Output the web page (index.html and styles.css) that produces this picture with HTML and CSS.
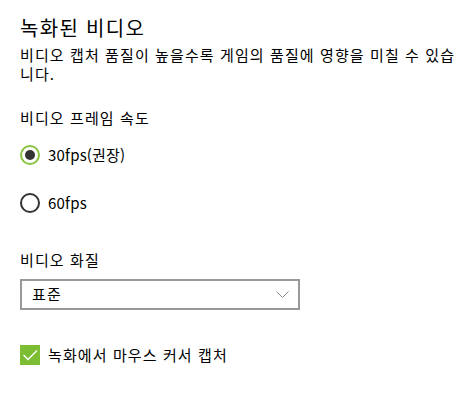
FILE: index.html
```html
<!DOCTYPE html>
<html lang="ko">
<head>
<meta charset="utf-8">
<link rel="stylesheet" href="styles.css">
</head>
<body>
<main class="page">
  <h1 class="title">녹화된 비디오</h1>
  <p class="desc"><span class="line">비디오 캡처 품질이 높을수록 게임의 품질에 영향을 미칠 수 있습</span><span class="line">니다.</span></p>

  <section class="group frame">
    <div class="label">비디오 프레임 속도</div>
    <div class="radios">
      <label class="radio checked"><span class="ring"><span class="dot"></span></span><span class="rtext">30fps(권장)</span></label>
      <label class="radio"><span class="ring"></span><span class="rtext">60fps</span></label>
    </div>
  </section>

  <section class="group quality">
    <div class="label">비디오 화질</div>
    <div class="select">
      <span class="value">표준</span>
      <svg class="chev" width="13" height="7" viewBox="0 0 13 7"><path d="M0.5 0.5 L6.5 6.5 L12.5 0.5" fill="none" stroke="#8c8c8c" stroke-width="1"/></svg>
    </div>
  </section>

  <label class="check">
    <span class="box"><svg width="20" height="20" viewBox="0 0 20 20"><path d="M3.5 10 L8 14.5 L17 5.5" fill="none" stroke="#fff" stroke-width="1.3"/></svg></span>
    <span class="ctext">녹화에서 마우스 커서 캡처</span>
  </label>
</main>
</body>
</html>
```

FILE: styles.css
```css
html, body {
  margin: 0;
  padding: 0;
  background: #fff;
}
.page {
  padding: 14px 0 0 20px;
  font-family: "Noto Sans CJK KR", "Noto Sans", sans-serif;
  color: #000;
  display: flex;
  flex-direction: column;
  align-items: flex-start;
}
.title {
  margin: 0;
  font-size: 20px;
  font-weight: 400;
  line-height: 28px;
  letter-spacing: 1.3px;
}
.desc {
  margin: 3px 0 0;
  font-size: 15px;
  line-height: 19px;
  letter-spacing: 1.1px;
  display: flex;
  flex-direction: column;
}
.line {
  white-space: nowrap;
}
.group {
  display: flex;
  flex-direction: column;
  align-items: flex-start;
}
.frame {
  margin-top: 25px;
}
.label {
  font-size: 15px;
  line-height: 20px;
  letter-spacing: 1.1px;
}
.radios {
  margin-top: 17px;
  display: flex;
  flex-direction: column;
  gap: 28px;
}
.radio {
  display: flex;
  align-items: center;
  gap: 8px;
  height: 20px;
  font-size: 15px;
}
.ring {
  width: 20px;
  height: 20px;
  box-sizing: border-box;
  border: 2px solid #333;
  border-radius: 50%;
  display: flex;
  align-items: center;
  justify-content: center;
}
.radio.checked .ring {
  border-color: #88c440;
}
.dot {
  width: 10px;
  height: 10px;
  border-radius: 50%;
  background: #333;
}
.rtext {
  line-height: 20px;
  letter-spacing: 0.2px;
}
.quality {
  margin-top: 37px;
}
.select {
  margin-top: 9px;
  box-sizing: border-box;
  width: 280px;
  height: 31px;
  border: 2px solid #999;
  display: flex;
  align-items: center;
  justify-content: space-between;
  padding: 0 9px 0 10px;
  font-size: 15px;
  letter-spacing: 1.1px;
}
.value {
  line-height: 20px;
  margin-top: -1px;
}
.chev {
  display: block;
  margin-top: -1px;
}
.check {
  margin-top: 35px;
  display: flex;
  align-items: center;
  gap: 8px;
  font-size: 15px;
}
.box {
  width: 20px;
  height: 20px;
  background: #7cbd34;
  display: block;
}
.box svg {
  display: block;
}
.ctext {
  line-height: 20px;
  letter-spacing: 1.1px;
}
```
